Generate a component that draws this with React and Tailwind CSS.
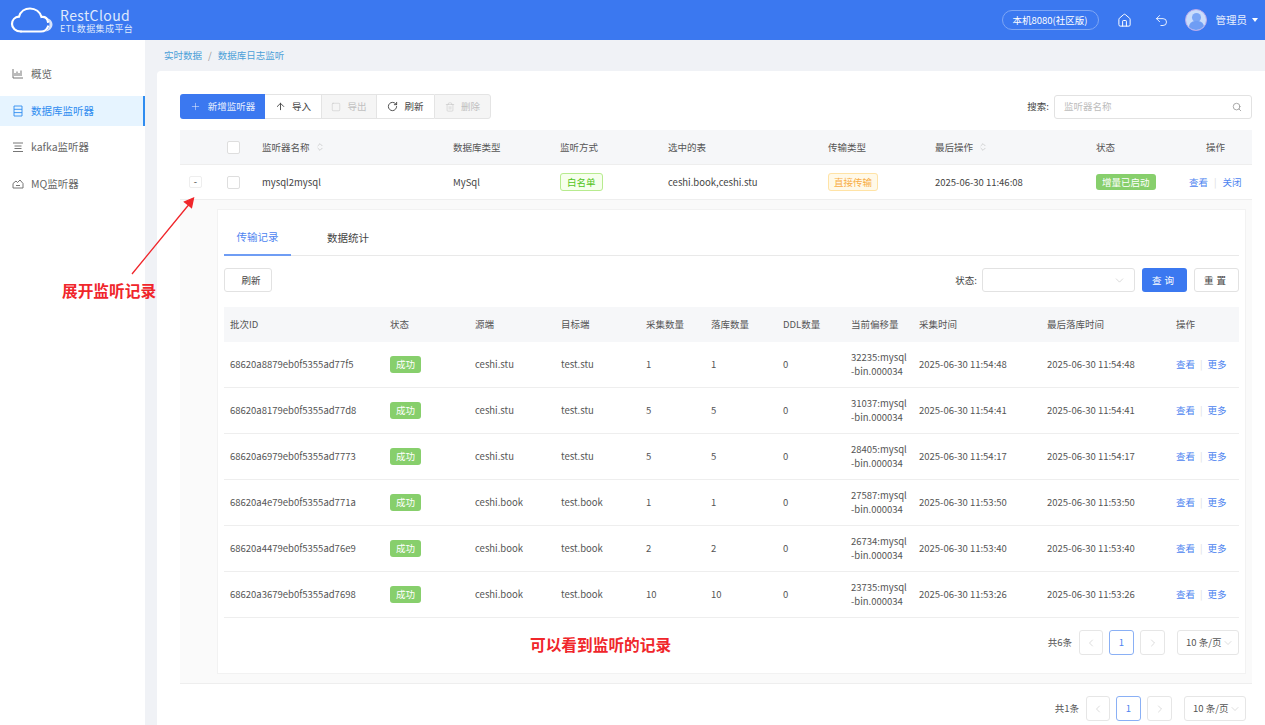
import { Plus, ArrowUp, RotateCw, Trash2, Search, ChevronDown, ChevronLeft, ChevronRight, ChevronsUpDown, Undo2, House, Square } from "lucide-react"

const font = { fontFamily: '"Noto Sans CJK SC", "Noto Sans", sans-serif' }

const records = [
  { id: "68620a8879eb0f5355ad77f5", src: "ceshi.stu", dst: "test.stu", n: 1, off: "32235:mysql", t: "2025-06-30 11:54:48" },
  { id: "68620a8179eb0f5355ad77d8", src: "ceshi.stu", dst: "test.stu", n: 5, off: "31037:mysql", t: "2025-06-30 11:54:41" },
  { id: "68620a6979eb0f5355ad7773", src: "ceshi.stu", dst: "test.stu", n: 5, off: "28405:mysql", t: "2025-06-30 11:54:17" },
  { id: "68620a4e79eb0f5355ad771a", src: "ceshi.book", dst: "test.book", n: 1, off: "27587:mysql", t: "2025-06-30 11:53:50" },
  { id: "68620a4479eb0f5355ad76e9", src: "ceshi.book", dst: "test.book", n: 2, off: "26734:mysql", t: "2025-06-30 11:53:40" },
  { id: "68620a3679eb0f5355ad7698", src: "ceshi.book", dst: "test.book", n: 10, off: "23735:mysql", t: "2025-06-30 11:53:26" },
]

const outerCols = "grid grid-cols-[82px_191px_107px_108px_160px_107px_161px_93px_1fr] items-center"
const innerCols = "grid grid-cols-[160px_85px_86px_85px_65px_72px_68px_68px_128px_129px_1fr] items-center"

function Logo() {
  return (
    <svg width="44" height="26" viewBox="0 0 44 26" fill="none">
      <path d="M11 24.5C5.5 24.5 2 21 2 17c0-4 3-7 7-7.300C10.500 4.500 15 1.500 20 1.500c5.500 0 10 3.500 11.500 8.500 3.500-.300 6 1.500 6.500 5" stroke="white" strokeWidth="2.200" strokeLinecap="round" />
      <path d="M11 24.500h20c3 0 6-2 7-5" stroke="white" strokeWidth="2.200" strokeLinecap="round" />
      <path d="M37 11c3 1 5.500 3 5.500 6.500 0 3.500-3 6.500-7 7 2.500-2 4-4 4-7 0-2.500-1-4.500-2.500-6.500z" fill="white" fillOpacity="0.8" />
    </svg>
  )
}

function Pager({ total }) {
  return (
    <div className="flex items-center text-[9.5px] text-[#555]">
      <span className="mr-[7px]">共{total}条</span>
      <span className="w-[24px] h-[25px] border border-[#e6e6e6] rounded-[3px] flex items-center justify-center text-[#c4c4c4]"><ChevronLeft size={12} strokeWidth={1.2} /></span>
      <span className="w-[25px] h-[25px] ml-[6px] border border-[#8ab0f5] rounded-[3px] flex items-center justify-center text-[#4d84f0]">1</span>
      <span className="w-[25px] h-[25px] ml-[6px] border border-[#e6e6e6] rounded-[3px] flex items-center justify-center text-[#c4c4c4]"><ChevronRight size={12} strokeWidth={1.2} /></span>
      <span className="w-[62px] h-[25px] ml-[12px] border border-[#e6e6e6] rounded-[3px] flex items-center pl-[8px] gap-[1px] whitespace-nowrap">10 条/页<ChevronDown size={12} strokeWidth={1} className="text-[#bbb]" /></span>
    </div>
  )
}

function Checkbox() {
  return <span className="block w-[13px] h-[13px] bg-white border border-[#dedede] rounded-[2px]" />
}

function SideIcon({ kind }) {
  const paths = {
    chart: <path d="M1 1v9h10M3 8V5M5 8V3.500M7 8V5M9 8V2.500" />,
    list: <path d="M2 1h8v10H2zM2 4.300h8M2 7.600h8" />,
    kafka: <path d="M1 2h10M2.500 5h7M2.500 7.500h7M1 10.500h10M1 2v0" />,
    mq: <path d="M1 5.500 4 3l1.500 1.500L8 2l3 3.500v4.500H1zM4 7.500h4" />,
  }
  return (
    <svg width="12" height="12" viewBox="0 0 12 12" fill="none" stroke="currentColor" strokeWidth="0.900">
      {paths[kind]}
    </svg>
  )
}

const menu = [
  { label: "概览", icon: "chart" },
  { label: "数据库监听器", icon: "list", active: true },
  { label: "kafka监听器", icon: "kafka" },
  { label: "MQ监听器", icon: "mq" },
]

function Sort() {
  return <ChevronsUpDown size={10} strokeWidth={1.5} className="text-[#bbb] ml-[5px]" />
}

export default function App() {
  return (
    <div style={font} className="relative h-screen overflow-hidden bg-[#f0f2f6] text-[9.5px] text-[#555]">
      <header className="h-10 bg-[#3b78f0] flex items-center text-white">
        <div className="ml-[10px]"><Logo /></div>
        <div className="ml-[6px] leading-none">
          <div className="text-[14px] tracking-[0.4px] text-[#dfe9fd]">RestCloud</div>
          <div className="text-[9px] mt-[2px] tracking-[0.4px] text-[#dfe9fd]">ETL数据集成平台</div>
        </div>
        <div className="ml-auto flex items-center">
          <span className="w-[97px] h-[20px] rounded-full border border-[#7ea6f5] flex items-center justify-center text-[9.5px]">本机8080(社区版)</span>
          <House size={15} strokeWidth={1.6} className="ml-[18px]" />
          <Undo2 size={15} strokeWidth={1.4} className="ml-[22px]" />
          <span className="relative ml-[16px] w-[22px] h-[22px] rounded-full bg-[#c9dcfb] border border-[#b7a8ec] overflow-hidden">
            <span className="absolute left-[6px] top-[3px] w-[9px] h-[9px] rounded-full bg-[#7ba6f5]" />
            <span className="absolute left-[3px] top-[11px] w-[15px] h-[12px] rounded-full bg-[#6f9df4]" />
          </span>
          <span className="ml-[9px] text-[10.5px] text-[#e8effd]">管理员</span>
          <span className="ml-[5px] mr-[7px] w-0 h-0 border-x-[3px] border-x-transparent border-t-[4px] border-t-white" />
        </div>
      </header>

      <div className="flex h-[685px]">
        <aside className="w-[145px] bg-white pt-[19px] flex flex-col gap-[6.500px] shrink-0">
          {menu.map((m) => (
            <div
              key={m.label}
              className={`h-[30px] flex items-center pl-[12px] gap-[7px] text-[10.500px] ${
                m.active ? "bg-[#e6f4ff] text-[#2f8cf0] border-r-2 border-[#2f8cf0]" : "text-[#666]"
              }`}
            >
              <SideIcon kind={m.icon} />
              {m.label}
            </div>
          ))}
        </aside>

        <main className="flex-1 min-w-0 pl-[12px]">
          <div className="h-[31px] flex items-center pl-[7px] text-[9.500px] text-[#4ba0d8]">
            实时数据<span className="mx-[6px] text-[#999]">/</span>数据库日志监听
          </div>

          <section className="bg-white rounded-tl-[4px] h-[654px] pl-[23px] pr-[13px] pt-[23px]">
            <div className="flex items-center justify-between h-[25px]">
              <div className="flex h-[25px] text-[9.500px] text-[#444]">
                <button className="w-[85px] bg-[#3b78f0] text-[#e8effd] rounded-l-[3px] flex items-center justify-center gap-[7px]"><Plus size={11} strokeWidth={1.2} />新增监听器</button>
                <button className="w-[56px] border-y border-[#e4e4e4] flex items-center justify-center gap-[6px]"><ArrowUp size={11} />导入</button>
                <button className="w-[56px] border border-[#e4e4e4] bg-[#f5f5f5] text-[#c0c0c0] flex items-center justify-center gap-[6px]"><Square size={10} strokeWidth={1.2} />导出</button>
                <button className="w-[57px] border-y border-[#e4e4e4] flex items-center justify-center gap-[6px]"><RotateCw size={11} />刷新</button>
                <button className="w-[57px] border border-[#e4e4e4] bg-[#f5f5f5] text-[#c0c0c0] rounded-r-[3px] flex items-center justify-center gap-[6px]"><Trash2 size={10} strokeWidth={1.2} />删除</button>
              </div>
              <div className="flex items-center">
                <span className="mr-[5px] text-[#444]">搜索:</span>
                <div className="w-[198px] h-[24px] border border-[#e2e2e2] rounded-[3px] flex items-center justify-between px-[9px] text-[#bcbcbc]">
                  监听器名称
                  <Search size={10} className="text-[#999]" />
                </div>
              </div>
            </div>

            <div className={`${outerCols} h-[35px] mt-[11px] bg-[#f6f7f9] border-b border-[#eeeeee]`}>
              <div className="pl-[47px]"><Checkbox /></div>
              <div className="flex items-center">监听器名称<Sort /></div>
              <div>数据库类型</div>
              <div>监听方式</div>
              <div>选中的表</div>
              <div>传输类型</div>
              <div className="flex items-center">最后操作<Sort /></div>
              <div>状态</div>
              <div className="pl-[17px]">操作</div>
            </div>

            <div className={`${outerCols} h-[35px] border-b border-[#eeeeee] text-[#444]`}>
              <div className="flex items-center pl-[9px]">
                <span className="w-[13px] h-[12px] border border-[#eeeeee] rounded-[2px] flex items-center justify-center leading-none">-</span>
                <span className="ml-[25px]"><Checkbox /></span>
              </div>
              <div>mysql2mysql</div>
              <div>MySql</div>
              <div><span className="px-[6px] py-[1px] rounded-[3px] border border-[#b7eb8f] bg-[#f6ffed] text-[#52c41a]">白名单</span></div>
              <div>ceshi.book,ceshi.stu</div>
              <div><span className="px-[5px] py-[1px] rounded-[3px] border border-[#ffe3a6] bg-[#fff9e8] text-[#f8ad45]">直接传输</span></div>
              <div>2025-06-30 11:46:08</div>
              <div><span className="inline-block px-[6px] py-[1px] rounded-[3px] bg-[#87cf6c] text-white">增量已启动</span></div>
              <div className="pl-[0px] whitespace-nowrap text-[#4d84f0]">查看<span className="mx-[6px] text-[#ddd]">|</span>关闭</div>
            </div>

            <div className="h-[484px] bg-[#fafafa] border-b border-[#eeeeee] pl-[37px] pr-[6px] pt-[9px]">
              <div className="h-[465px] bg-white border border-[#f2f2f2] px-[6px]">
                <div className="flex h-[46px] border-b border-[#e9e9e9] pt-[10px] text-[10.500px]">
                  <div className="w-[67px] h-[36px] border-b-2 border-[#6f9df4] -mb-px flex items-center justify-center text-[#4d84f0]">传输记录</div>
                  <div className="w-[114px] h-[36px] flex items-center justify-center text-[#444]">数据统计</div>
                </div>

                <div className="flex items-center h-[24px] mt-[12px] text-[#444]">
                  <button className="w-[48px] h-[24px] border border-[#e2e2e2] rounded-[3px] pl-[6px]">刷新</button>
                  <span className="ml-auto mr-[5px]">状态:</span>
                  <div className="w-[153px] h-[24px] border border-[#e2e2e2] rounded-[3px] flex items-center justify-end pr-[8px]"><ChevronDown size={13} strokeWidth={1} className="text-[#bbb]" /></div>
                  <button className="w-[45px] h-[24px] ml-[7px] rounded-[3px] bg-[#3b78f0] text-white tracking-[3px]">查询</button>
                  <button className="w-[45px] h-[24px] ml-[7px] border border-[#e2e2e2] rounded-[3px] tracking-[3px]">重置</button>
                </div>

                <div className={`${innerCols} h-[35px] mt-[15px] bg-[#f6f7f9] pl-[6px]`}>
                  <div>批次ID</div>
                  <div>状态</div>
                  <div>源端</div>
                  <div>目标端</div>
                  <div>采集数量</div>
                  <div>落库数量</div>
                  <div>DDL数量</div>
                  <div>当前偏移量</div>
                  <div>采集时间</div>
                  <div>最后落库时间</div>
                  <div>操作</div>
                </div>

                {records.map((r) => (
                  <div key={r.id} className={`${innerCols} h-[46px] border-b border-[#eeeeee] pl-[6px] text-[#555]`}>
                    <div>{r.id}</div>
                    <div><span className="inline-block px-[6px] py-[1px] rounded-[3px] bg-[#87cf6c] text-white">成功</span></div>
                    <div>{r.src}</div>
                    <div>{r.dst}</div>
                    <div>{r.n}</div>
                    <div>{r.n}</div>
                    <div>0</div>
                    <div className="leading-[13.500px]">{r.off}<br />-bin.000034</div>
                    <div>{r.t}</div>
                    <div>{r.t}</div>
                    <div className="whitespace-nowrap text-[#4d84f0]">查看<span className="mx-[5px] text-[#ddd]">|</span>更多</div>
                  </div>
                ))}

                <div className="flex justify-end mt-[12px]"><Pager total={6} /></div>
              </div>
            </div>

            <div className="flex justify-end mt-[12px] pr-[6px]"><Pager total={1} /></div>
          </section>
        </main>
      </div>

      <svg className="absolute left-0 top-0 pointer-events-none" width="1265" height="725" fill="none">
        <path d="M132 274 L188.500 205 L184.500 202 L193.500 198 L191.500 207.500 L188.500 205" stroke="#f0262b" strokeWidth="1.300" fill="#f0262b" />
      </svg>
      <div className="absolute left-[62px] top-[280px] text-[15.700px] font-bold text-[#f0262b] leading-[22px]">展开监听记录</div>
      <div className="absolute left-[530px] top-[634px] text-[15.700px] font-bold text-[#f0262b] leading-[22px]">可以看到监听的记录</div>
    </div>
  )
}
